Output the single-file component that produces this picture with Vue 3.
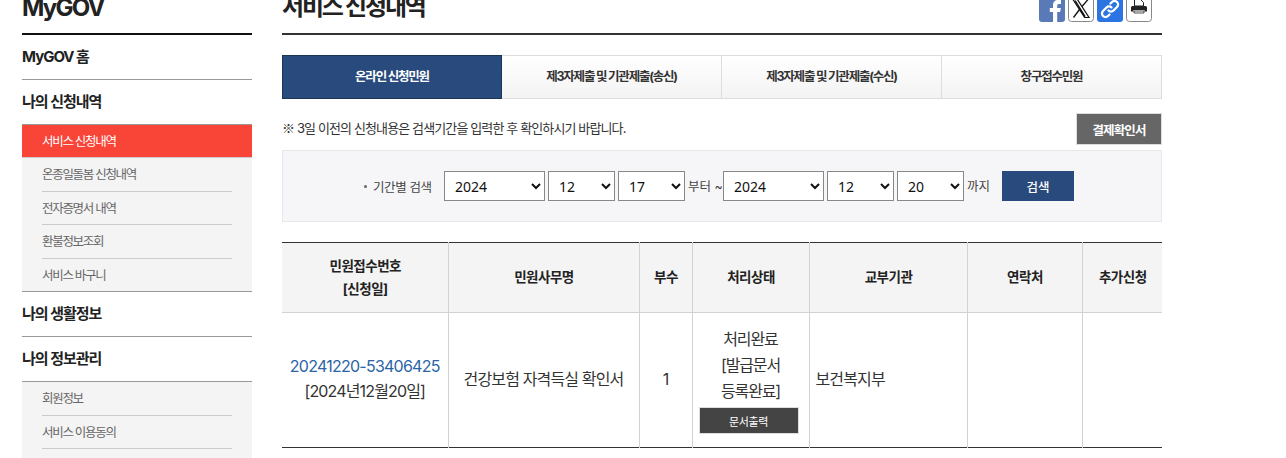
<script setup>
const tabs = ['온라인 신청민원', '제3자제출 및 기관제출(송신)', '제3자제출 및 기관제출(수신)', '창구접수민원']
const years = ['2023', '2024']
const months = ['11', '12']
</script>

<template>
  <div class="viewport">
    <div class="page">
      <aside class="side">
        <div class="brand">MyGOV</div>
        <div class="menu-h">MyGOV 홈</div>
        <div class="menu-h">나의 신청내역</div>
        <ul class="sub">
          <li class="on">서비스 신청내역</li>
          <li>온종일돌봄 신청내역</li>
          <li>전자증명서 내역</li>
          <li>환불정보조회</li>
          <li>서비스 바구니</li>
        </ul>
        <div class="menu-h">나의 생활정보</div>
        <div class="menu-h">나의 정보관리</div>
        <ul class="sub">
          <li>회원정보</li>
          <li>서비스 이용동의</li>
          <li></li>
        </ul>
      </aside>
      <main class="main">
        <header class="head">
          <h1>서비스 신청내역</h1>
          <div class="share">
            <svg class="ic fb" viewBox="0 0 26 26"><rect width="26" height="30" y="-4" rx="3" fill="#5a79b8"/><path d="M14 27v-11h-3.200v-4H14V9.200C14 6 16 4 19 4h3v4h-2c-1.300 0-1.800.7-1.800 1.800V12h3.600l-.6 4h-3v11z" fill="#fff"/></svg>
            <svg class="ic box" viewBox="0 0 26 26"><rect x=".5" y="-4" width="25" height="29.500" rx="3" fill="#fff" stroke="#888"/><path d="M5 3.500h4.400L21 21.500h-4.400zM7.200 4.500 17.200 20.500" fill="none" stroke="#111" stroke-width="1.200"/><path d="M20 3.500 14 10.500M11.500 13.500 5.500 21.500" stroke="#111" stroke-width="1.300" fill="none"/></svg>
            <svg class="ic" viewBox="0 0 26 26"><rect y="-4" width="26" height="30" rx="3" fill="#2b74e2"/><g fill="none" stroke="#fff" stroke-width="2.300" stroke-linecap="round"><path d="M11.500 14.500a3.500 3.500 0 0 0 5 0l3.500-3.500a3.500 3.500 0 0 0-5-5l-1.500 1.500"/><path d="M14.500 11.500a3.500 3.500 0 0 0-5 0L6 15a3.500 3.500 0 0 0 5 5l1.500-1.500"/></g></svg>
            <svg class="ic box" viewBox="0 0 26 26"><rect x=".5" y="-4" width="25" height="29.500" rx="3" fill="#fff" stroke="#888"/><path d="M8.500 3.500h6l3 3V10h-9z" fill="#fff" stroke="#222"/><path d="M6.500 10h13a1.500 1.500 0 0 1 1.500 1.500V15.500h-2.500v-1.500h-11v1.500H5V11.500A1.500 1.500 0 0 1 6.500 10z" fill="#222"/><path d="M8 15h10v2H8z" fill="#fff" stroke="#222" stroke-width=".8"/></svg>
          </div>
        </header>

        <nav class="tabs">
          <a v-for="(t, i) in tabs" :key="t" :class="['tab', { active: i === 0 }]">{{ t }}</a>
        </nav>

        <div class="notice">
          <p><span class="mark">※</span> 3일 이전의 신청내용은 검색기간을 입력한 후 확인하시기 바랍니다.</p>
          <button class="receipt">결제확인서</button>
        </div>

        <form class="search" @submit.prevent>
          <span class="lbl"><i></i>기간별 검색</span>
          <select class="y"><option v-for="y in years" :key="y" :selected="y === '2024'">{{ y }}</option></select>
          <select class="d"><option v-for="m in months" :key="m" :selected="m === '12'">{{ m }}</option></select>
          <select class="d"><option>17</option></select>
          <span class="from">부터 ~</span>
          <select class="y"><option v-for="y in years" :key="y" :selected="y === '2024'">{{ y }}</option></select>
          <select class="d"><option v-for="m in months" :key="m" :selected="m === '12'">{{ m }}</option></select>
          <select class="d"><option>20</option></select>
          <span class="to">까지</span>
          <button class="go">검색</button>
        </form>

        <table class="grid">
          <colgroup>
            <col class="c1" /><col class="c2" /><col class="c3" /><col class="c4" />
            <col class="c5" /><col class="c6" /><col class="c7" />
          </colgroup>
          <thead>
            <tr>
              <th>민원접수번호<br />[신청일]</th>
              <th>민원사무명</th>
              <th>부수</th>
              <th>처리상태</th>
              <th>교부기관</th>
              <th>연락처</th>
              <th>추가신청</th>
            </tr>
          </thead>
          <tbody>
            <tr>
              <td><a class="no">20241220-53406425</a><br />[2024년12월20일]</td>
              <td>건강보험 자격득실 확인서</td>
              <td>1</td>
              <td class="state">처리완료<br />[발급문서<br />등록완료]<button class="doc">문서출력</button></td>
              <td class="left">보건복지부</td>
              <td></td>
              <td></td>
            </tr>
          </tbody>
        </table>
      </main>
    </div>
  </div>
</template>

<style>
html, body { margin: 0; overflow: hidden; background: #fff; }
</style>

<style scoped>
.viewport { height: 458px; overflow: hidden; font-family: Inter, "Noto Sans CJK KR", sans-serif; color: #222; }
.page { display: flex; gap: 30px; margin-top: -30px; padding-left: 22px; width: 1140px; }
.side { width: 230px; flex: none; }
.brand { box-sizing: content-box; border-bottom: 2px solid #111; font-size: 24px; font-weight: 700; line-height: 28px; letter-spacing: -1.800px; display: flex; align-items: flex-end; height: 52px; padding-bottom: 11px; }
.menu-h { height: 44px; border-bottom: 1px solid #999; font-size: 15px; font-weight: 700; line-height: 43px; letter-spacing: -1px; color: #222; }
.sub { list-style: none; margin: 0; padding: 0 20px; background: #f4f4f4; border-bottom: 1px solid #999; }
.sub li { height: 33.500px; box-sizing: border-box; line-height: 34px; border-bottom: 1px solid #ccc; font-size: 12.500px; color: #666; letter-spacing: -1.300px; }
.sub li:last-child { height: 32.500px; border-bottom: 0; }
.sub li.on { height: 33px; line-height: 33px; background: #f94438; color: #fff; margin: 0 -20px; padding: 0 20px; }
.main { width: 880px; flex: none; }
.head { height: 63px; border-bottom: 2px solid #333; display: flex; justify-content: space-between; align-items: flex-end; }
h1 { margin: 0; font-size: 24px; font-weight: 700; letter-spacing: -2.200px; line-height: 34px; position: relative; top: -9px; color: #222; }
.share { display: flex; gap: 3px; margin-right: 10px; margin-bottom: 11px; }
.ic { width: 26px; height: 26px; overflow: visible; display: block; }
.tabs { display: grid; grid-template-columns: repeat(4, 220px); margin-top: 20px; }
.tab { height: 44px; box-sizing: border-box; border: 1px solid #ddd; border-left: 0; background: linear-gradient(#fff, #f3f3f3); font-size: 12.500px; font-weight: 700; text-align: center; line-height: 41px; letter-spacing: -1.200px; color: #333; }
.tab.active { background: #284a7c; color: #fff; border: 1px solid #1c3557; }
.notice { display: flex; justify-content: space-between; align-items: center; height: 32px; margin-top: 14px; }
.notice p { margin: 0; font-size: 13px; line-height: 30px; height: 32px; color: #333; letter-spacing: -.88px; }
.mark { font-family: "Noto Sans CJK KR", sans-serif; }
.receipt { width: 86px; height: 32px; background: #666; color: #fff; border: 1px solid #ddd; font: 700 12.500px Inter, "Noto Sans CJK KR", sans-serif; letter-spacing: -.9px; padding: 0; }
.search { display: flex; align-items: center; margin-top: 5px; height: 72px; box-sizing: border-box; border: 1px solid #e8e8ec; background: #f6f6f9; padding-left: 81px; font-size: 12.500px; color: #444; }
.lbl { width: 80px; flex: none; letter-spacing: -.4px; white-space: nowrap; display: flex; align-items: center; }
.lbl i { width: 3px; height: 3px; border-radius: 50%; background: #666; margin-right: 6px; }
select { height: 30px; box-sizing: border-box; background: #fff; border: 1px solid #888; font: 14px "Noto Sans", sans-serif; color: #111; padding-left: 6px; margin: 0; border-radius: 0; }
select.y { width: 101px; }
select.d { width: 67px; margin-left: 3px; }
.from { width: 35px; margin-left: 3px; white-space: nowrap; position: relative; top: -1px; }
.to { width: 35px; margin-left: 3px; white-space: nowrap; position: relative; top: -1px; }
.go { width: 72px; height: 30px; background: #284a7c; color: #fff; border: 0; font: 500 12.500px Inter, "Noto Sans CJK KR", sans-serif; padding: 0; }
.grid { width: 880px; table-layout: fixed; border-collapse: collapse; margin-top: 20px; border-top: 1px solid #333; border-bottom: 1px solid #333; font-size: 16px; }
.c1 { width: 166px; } .c2 { width: 191px; } .c3 { width: 53px; } .c4 { width: 117px; }
.c5 { width: 158px; } .c6 { width: 115px; } .c7 { width: 80px; }
.grid th, .grid td { border-left: 1px solid #d2d2d2; text-align: center; padding: 0; }
.grid th:first-child, .grid td:first-child { border-left: 0; }
.grid th { height: 69px; padding-left: 1px; background: #f4f4f4; border-bottom: 1px solid #d2d2d2; font-size: 13.500px; font-weight: 700; line-height: 23px; letter-spacing: -.5px; color: #222; }
.grid td { height: 132px; padding-bottom: 2px; line-height: 25px; letter-spacing: -.85px; color: #333; vertical-align: middle; }
.no { color: #2b63a6; letter-spacing: -.75px; }
.grid td.state { height: 134px; padding-bottom: 0; line-height: 26px; letter-spacing: -1.100px; }
.left { text-align: left !important; padding-left: 6px !important; }
.doc { display: block; width: 100px; height: 27px; margin: 3px 0 0 6px; background: #444; border: 1px solid #ddd; color: #fff; font: 400 11px Inter, "Noto Sans CJK KR", sans-serif; letter-spacing: -.4px; padding: 0; }
</style>
